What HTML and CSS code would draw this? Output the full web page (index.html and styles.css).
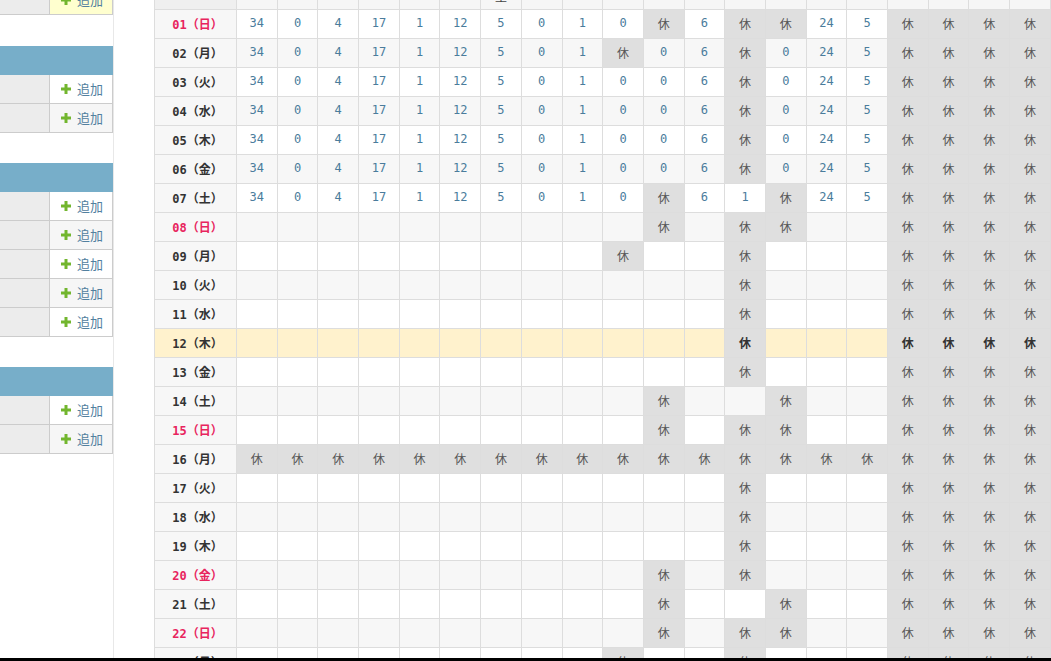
FILE: index.html
```html
<!DOCTYPE html>
<html lang="ja">
<head>
<meta charset="utf-8">
<title>シフト表</title>
<link rel="stylesheet" href="styles.css">
</head>
<body>
<div class="page">
  <aside class="sidebar">
    <div class="panel">
      <div class="group">
        <div class="prow"><div class="plabel"></div><div class="padd active"><svg class="plus" width="10" height="10" viewBox="0 0 10 10"><rect x="0" y="3.5" width="10" height="3"/><rect x="3.5" y="0" width="3" height="10"/></svg>追加</div></div>
      </div>
      <div class="group">
        <div class="phead"></div>
        <div class="prow"><div class="plabel"></div><div class="padd"><svg class="plus" width="10" height="10" viewBox="0 0 10 10"><rect x="0" y="3.5" width="10" height="3"/><rect x="3.5" y="0" width="3" height="10"/></svg>追加</div></div>
        <div class="prow alt"><div class="plabel"></div><div class="padd"><svg class="plus" width="10" height="10" viewBox="0 0 10 10"><rect x="0" y="3.5" width="10" height="3"/><rect x="3.5" y="0" width="3" height="10"/></svg>追加</div></div>
      </div>
      <div class="group">
        <div class="phead"></div>
        <div class="prow"><div class="plabel"></div><div class="padd"><svg class="plus" width="10" height="10" viewBox="0 0 10 10"><rect x="0" y="3.5" width="10" height="3"/><rect x="3.5" y="0" width="3" height="10"/></svg>追加</div></div>
        <div class="prow alt"><div class="plabel"></div><div class="padd"><svg class="plus" width="10" height="10" viewBox="0 0 10 10"><rect x="0" y="3.5" width="10" height="3"/><rect x="3.5" y="0" width="3" height="10"/></svg>追加</div></div>
        <div class="prow"><div class="plabel"></div><div class="padd"><svg class="plus" width="10" height="10" viewBox="0 0 10 10"><rect x="0" y="3.5" width="10" height="3"/><rect x="3.5" y="0" width="3" height="10"/></svg>追加</div></div>
        <div class="prow alt"><div class="plabel"></div><div class="padd"><svg class="plus" width="10" height="10" viewBox="0 0 10 10"><rect x="0" y="3.5" width="10" height="3"/><rect x="3.5" y="0" width="3" height="10"/></svg>追加</div></div>
        <div class="prow"><div class="plabel"></div><div class="padd"><svg class="plus" width="10" height="10" viewBox="0 0 10 10"><rect x="0" y="3.5" width="10" height="3"/><rect x="3.5" y="0" width="3" height="10"/></svg>追加</div></div>
      </div>
      <div class="group">
        <div class="phead"></div>
        <div class="prow"><div class="plabel"></div><div class="padd"><svg class="plus" width="10" height="10" viewBox="0 0 10 10"><rect x="0" y="3.5" width="10" height="3"/><rect x="3.5" y="0" width="3" height="10"/></svg>追加</div></div>
        <div class="prow alt"><div class="plabel"></div><div class="padd"><svg class="plus" width="10" height="10" viewBox="0 0 10 10"><rect x="0" y="3.5" width="10" height="3"/><rect x="3.5" y="0" width="3" height="10"/></svg>追加</div></div>
      </div>
    </div>
  </aside>
  <main class="main">
    <table class="shift">
      <colgroup><col class="c-date"><col span="20"></colgroup>
      <thead>
        <tr><th class="hd"></th><th></th><th></th><th></th><th></th><th></th><th></th><th>土</th><th></th><th></th><th></th><th></th><th></th><th></th><th></th><th></th><th></th><th></th><th></th><th></th><th><span class="tail">ッ</span></th></tr>
      </thead>
      <tbody>
        <tr><th class="d red">01（日）</th><td class="n">34</td><td class="n">0</td><td class="n">4</td><td class="n">17</td><td class="n">1</td><td class="n">12</td><td class="n">5</td><td class="n">0</td><td class="n">1</td><td class="n">0</td><td class="h">休</td><td class="n">6</td><td class="h">休</td><td class="h">休</td><td class="n">24</td><td class="n">5</td><td class="h">休</td><td class="h">休</td><td class="h">休</td><td class="h">休</td></tr>
        <tr><th class="d">02（月）</th><td class="n">34</td><td class="n">0</td><td class="n">4</td><td class="n">17</td><td class="n">1</td><td class="n">12</td><td class="n">5</td><td class="n">0</td><td class="n">1</td><td class="h">休</td><td class="n">0</td><td class="n">6</td><td class="h">休</td><td class="n">0</td><td class="n">24</td><td class="n">5</td><td class="h">休</td><td class="h">休</td><td class="h">休</td><td class="h">休</td></tr>
        <tr><th class="d">03（火）</th><td class="n">34</td><td class="n">0</td><td class="n">4</td><td class="n">17</td><td class="n">1</td><td class="n">12</td><td class="n">5</td><td class="n">0</td><td class="n">1</td><td class="n">0</td><td class="n">0</td><td class="n">6</td><td class="h">休</td><td class="n">0</td><td class="n">24</td><td class="n">5</td><td class="h">休</td><td class="h">休</td><td class="h">休</td><td class="h">休</td></tr>
        <tr><th class="d">04（水）</th><td class="n">34</td><td class="n">0</td><td class="n">4</td><td class="n">17</td><td class="n">1</td><td class="n">12</td><td class="n">5</td><td class="n">0</td><td class="n">1</td><td class="n">0</td><td class="n">0</td><td class="n">6</td><td class="h">休</td><td class="n">0</td><td class="n">24</td><td class="n">5</td><td class="h">休</td><td class="h">休</td><td class="h">休</td><td class="h">休</td></tr>
        <tr><th class="d">05（木）</th><td class="n">34</td><td class="n">0</td><td class="n">4</td><td class="n">17</td><td class="n">1</td><td class="n">12</td><td class="n">5</td><td class="n">0</td><td class="n">1</td><td class="n">0</td><td class="n">0</td><td class="n">6</td><td class="h">休</td><td class="n">0</td><td class="n">24</td><td class="n">5</td><td class="h">休</td><td class="h">休</td><td class="h">休</td><td class="h">休</td></tr>
        <tr><th class="d">06（金）</th><td class="n">34</td><td class="n">0</td><td class="n">4</td><td class="n">17</td><td class="n">1</td><td class="n">12</td><td class="n">5</td><td class="n">0</td><td class="n">1</td><td class="n">0</td><td class="n">0</td><td class="n">6</td><td class="h">休</td><td class="n">0</td><td class="n">24</td><td class="n">5</td><td class="h">休</td><td class="h">休</td><td class="h">休</td><td class="h">休</td></tr>
        <tr><th class="d">07（土）</th><td class="n">34</td><td class="n">0</td><td class="n">4</td><td class="n">17</td><td class="n">1</td><td class="n">12</td><td class="n">5</td><td class="n">0</td><td class="n">1</td><td class="n">0</td><td class="h">休</td><td class="n">6</td><td class="n">1</td><td class="h">休</td><td class="n">24</td><td class="n">5</td><td class="h">休</td><td class="h">休</td><td class="h">休</td><td class="h">休</td></tr>
        <tr><th class="d red">08（日）</th><td></td><td></td><td></td><td></td><td></td><td></td><td></td><td></td><td></td><td></td><td class="h">休</td><td></td><td class="h">休</td><td class="h">休</td><td></td><td></td><td class="h">休</td><td class="h">休</td><td class="h">休</td><td class="h">休</td></tr>
        <tr><th class="d">09（月）</th><td></td><td></td><td></td><td></td><td></td><td></td><td></td><td></td><td></td><td class="h">休</td><td></td><td></td><td class="h">休</td><td></td><td></td><td></td><td class="h">休</td><td class="h">休</td><td class="h">休</td><td class="h">休</td></tr>
        <tr><th class="d">10（火）</th><td></td><td></td><td></td><td></td><td></td><td></td><td></td><td></td><td></td><td></td><td></td><td></td><td class="h">休</td><td></td><td></td><td></td><td class="h">休</td><td class="h">休</td><td class="h">休</td><td class="h">休</td></tr>
        <tr><th class="d">11（水）</th><td></td><td></td><td></td><td></td><td></td><td></td><td></td><td></td><td></td><td></td><td></td><td></td><td class="h">休</td><td></td><td></td><td></td><td class="h">休</td><td class="h">休</td><td class="h">休</td><td class="h">休</td></tr>
        <tr class="today"><th class="d">12（木）</th><td></td><td></td><td></td><td></td><td></td><td></td><td></td><td></td><td></td><td></td><td></td><td></td><td class="h">休</td><td></td><td></td><td></td><td class="h">休</td><td class="h">休</td><td class="h">休</td><td class="h">休</td></tr>
        <tr><th class="d">13（金）</th><td></td><td></td><td></td><td></td><td></td><td></td><td></td><td></td><td></td><td></td><td></td><td></td><td class="h">休</td><td></td><td></td><td></td><td class="h">休</td><td class="h">休</td><td class="h">休</td><td class="h">休</td></tr>
        <tr><th class="d">14（土）</th><td></td><td></td><td></td><td></td><td></td><td></td><td></td><td></td><td></td><td></td><td class="h">休</td><td></td><td></td><td class="h">休</td><td></td><td></td><td class="h">休</td><td class="h">休</td><td class="h">休</td><td class="h">休</td></tr>
        <tr><th class="d red">15（日）</th><td></td><td></td><td></td><td></td><td></td><td></td><td></td><td></td><td></td><td></td><td class="h">休</td><td></td><td class="h">休</td><td class="h">休</td><td></td><td></td><td class="h">休</td><td class="h">休</td><td class="h">休</td><td class="h">休</td></tr>
        <tr><th class="d">16（月）</th><td class="h">休</td><td class="h">休</td><td class="h">休</td><td class="h">休</td><td class="h">休</td><td class="h">休</td><td class="h">休</td><td class="h">休</td><td class="h">休</td><td class="h">休</td><td class="h">休</td><td class="h">休</td><td class="h">休</td><td class="h">休</td><td class="h">休</td><td class="h">休</td><td class="h">休</td><td class="h">休</td><td class="h">休</td><td class="h">休</td></tr>
        <tr><th class="d">17（火）</th><td></td><td></td><td></td><td></td><td></td><td></td><td></td><td></td><td></td><td></td><td></td><td></td><td class="h">休</td><td></td><td></td><td></td><td class="h">休</td><td class="h">休</td><td class="h">休</td><td class="h">休</td></tr>
        <tr><th class="d">18（水）</th><td></td><td></td><td></td><td></td><td></td><td></td><td></td><td></td><td></td><td></td><td></td><td></td><td class="h">休</td><td></td><td></td><td></td><td class="h">休</td><td class="h">休</td><td class="h">休</td><td class="h">休</td></tr>
        <tr><th class="d">19（木）</th><td></td><td></td><td></td><td></td><td></td><td></td><td></td><td></td><td></td><td></td><td></td><td></td><td class="h">休</td><td></td><td></td><td></td><td class="h">休</td><td class="h">休</td><td class="h">休</td><td class="h">休</td></tr>
        <tr><th class="d red">20（金）</th><td></td><td></td><td></td><td></td><td></td><td></td><td></td><td></td><td></td><td></td><td class="h">休</td><td></td><td class="h">休</td><td></td><td></td><td></td><td class="h">休</td><td class="h">休</td><td class="h">休</td><td class="h">休</td></tr>
        <tr><th class="d">21（土）</th><td></td><td></td><td></td><td></td><td></td><td></td><td></td><td></td><td></td><td></td><td class="h">休</td><td></td><td></td><td class="h">休</td><td></td><td></td><td class="h">休</td><td class="h">休</td><td class="h">休</td><td class="h">休</td></tr>
        <tr><th class="d red">22（日）</th><td></td><td></td><td></td><td></td><td></td><td></td><td></td><td></td><td></td><td></td><td class="h">休</td><td></td><td class="h">休</td><td class="h">休</td><td></td><td></td><td class="h">休</td><td class="h">休</td><td class="h">休</td><td class="h">休</td></tr>
        <tr><th class="d">23（月）</th><td></td><td></td><td></td><td></td><td></td><td></td><td></td><td></td><td></td><td class="h">休</td><td></td><td></td><td class="h">休</td><td></td><td></td><td></td><td class="h">休</td><td class="h">休</td><td class="h">休</td><td class="h">休</td></tr>
      </tbody>
    </table>
  </main>
</div>
<div class="screen-edge"></div>
</body>
</html>
```

FILE: styles.css
```css
html, body {
  margin: 0;
  padding: 0;
  background: #fff;
}
body {
  height: 661px;
  overflow: hidden;
  font-family: "DejaVu Sans Mono", "Noto Sans CJK JP", monospace;
  font-size: 12px;
  color: #333;
}
.page {
  display: flex;
  align-items: flex-start;
}

/* sidebar */
.sidebar {
  flex: none;
  width: 114px;
  box-sizing: border-box;
  border-right: 1px solid #e8e8e8;
  height: 661px;
}
.panel {
  width: 113px;
  margin-top: -14px;
}
.group + .group {
  margin-top: 30px;
}
.group:nth-child(2) {
  margin-top: 31px;
}
.phead {
  height: 29px;
  background: #77aec9;
}
.prow {
  display: flex;
  height: 28px;
  border-bottom: 1px solid #cccccc;
  border-right: 1px solid #cccccc;
}
.plabel {
  width: 49px;
  flex: none;
  background: #ececec;
  border-right: 1px solid #cccccc;
}
.padd {
  flex: 1;
  display: flex;
  align-items: center;
  justify-content: center;
  gap: 6px;
  background: #ffffff;
  font-family: "Noto Sans CJK JP", sans-serif;
  font-size: 13px;
  color: #52809f;
  padding-left: 2px;
  padding-bottom: 1px;
}
.prow.alt .padd {
  background: #f6f6f6;
}
.padd.active {
  background: #ffffcf;
}
.plus {
  fill: #72b62e;
  flex: none;
}

/* main table */
.main {
  flex: 1;
  padding-left: 40px;
}
.shift {
  margin-top: -20px;
  width: 897px;
  border-collapse: collapse;
  table-layout: fixed;
}
.c-date {
  width: 82px;
}
.shift th,
.shift td {
  border: 1px solid #dddddd;
  height: 29px;
  padding: 0;
  text-align: center;
  vertical-align: middle;
  box-sizing: border-box;
}
.shift tbody th,
.shift tbody td {
  padding-bottom: 2px;
}
.shift thead th {
  height: 29px;
  background: #f6f6f6;
  vertical-align: bottom;
  font-family: "Noto Sans CJK JP", sans-serif;
  font-weight: normal;
  font-size: 12px;
  line-height: 14px;
  padding-bottom: 5px;
  color: #444;
}
.shift thead th.hd {
  background: #efefef;
}
.shift .tail {
  display: inline-block;
  padding-left: 10px;
  margin-bottom: 4px;
}
.shift tbody tr:nth-child(odd) td {
  background: #ffffff;
}
.shift tbody tr:nth-child(even) td {
  background: #f7f7f7;
}
.shift th.d {
  background: #f7f7f7;
  font-weight: bold;
  color: #333;
  font-size: 12px;
  padding-left: 4px;
}
.shift th.d.red {
  color: #e8245e;
}
.shift td.n {
  color: #4a7c9c;
}
.shift tbody tr td.h {
  background: #dfdfdf;
  color: #555;
  font-family: "Noto Sans CJK JP", sans-serif;
}
.shift tbody tr.today td,
.shift tbody tr.today th.d {
  background: #fff2cd;
}
.shift tbody tr.today td.h {
  background: #dfdfdf;
  font-weight: bold;
  color: #333;
}

.screen-edge {
  position: fixed;
  left: 0;
  right: 0;
  bottom: 0;
  height: 3px;
  background: #000;
}
```
